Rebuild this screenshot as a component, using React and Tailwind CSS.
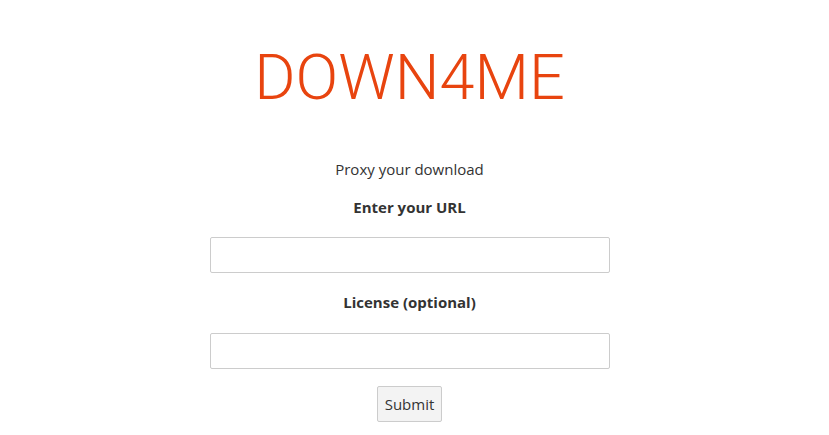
export default function App() {
  return (
    <div className="min-h-[435px] w-full pr-[10px] bg-white flex flex-col items-center text-[#333] font-['Open_Sans','Noto_Sans',sans-serif]">
      <h1 className="mt-[40px] text-[63px] leading-[76px] font-light text-[#e8440f] font-['Roboto','Lato',sans-serif]">
        DOWN4ME
      </h1>
      <p className="mt-[42px] text-[15px] leading-[22px]">Proxy your download</p>
      <form className="flex flex-col items-center w-[400px]" onSubmit={(e) => e.preventDefault()}>
        <label className="mt-[16px] text-[15px] leading-[22px] font-bold">Enter your URL</label>
        <input
          type="text"
          className="mt-[19px] w-[400px] h-[36px] border border-[#ccc] rounded-[2px] px-2 outline-none"
        />
        <label className="mt-[18px] text-[15px] leading-[22px] font-bold">License (optional)</label>
        <input
          type="text"
          className="mt-[20px] w-[400px] h-[36px] border border-[#ccc] rounded-[2px] px-2 outline-none"
        />
        <button
          type="submit"
          className="mt-[17px] h-[36px] px-[7px] border border-[#ccc] rounded-[2px] bg-[#f3f3f3] text-[15px] text-[#333]"
        >
          Submit
        </button>
      </form>
    </div>
  );
}
